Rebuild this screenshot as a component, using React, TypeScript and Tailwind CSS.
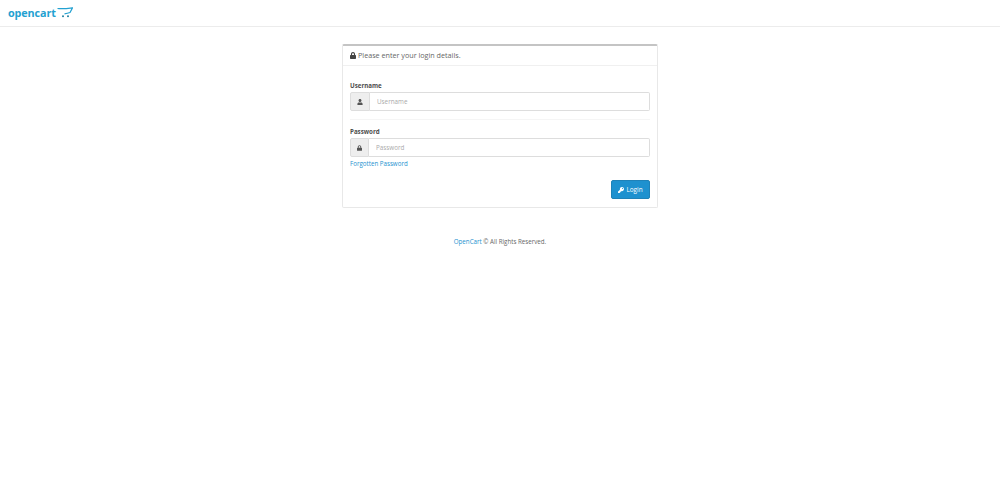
import React from 'react';
import { FaLock, FaUser, FaKey } from 'react-icons/fa';

const font = "font-['Open_Sans',sans-serif]";

const Logo: React.FC = () => (
    <div className="flex items-center">
        <span className={`text-[10.8px] leading-none font-bold text-[#23a1d1] tracking-[-0.1px] ${font}`}>opencart</span>
        <svg width="16" height="11" viewBox="0 0 16 11" className="ml-[1px] mt-[-1px]" fill="none">
            <path d="M0.5 1.5 C5 2 10 1.5 15.5 0.8 L13 5.5 C11 6.3 9.5 6.6 7.5 6.8" stroke="#23a1d1" strokeWidth="1.2" />
            <circle cx="6" cy="9.3" r="1" fill="#1f7f9f" />
            <circle cx="11" cy="9.3" r="1" fill="#1f7f9f" />
        </svg>
    </div>
);

interface FieldProps {
    label: string;
    placeholder: string;
    addonWidth: string;
    icon: React.ReactNode;
    type?: string;
}

const Field: React.FC<FieldProps> = ({ label, placeholder, addonWidth, icon, type = 'text' }) => (
    <div>
        <label className="block text-[6.2px] leading-[11px] font-bold text-[#4d4d4d] mb-[1px]">{label}</label>
        <div className="flex h-[19px]">
            <span className={`flex items-center justify-center bg-[#eeeeee] border border-[#dddddd] rounded-l-[2px] text-[#555555] ${addonWidth}`}>
                {icon}
            </span>
            <input
                type={type}
                placeholder={placeholder}
                className="flex-1 min-w-0 border border-l-0 border-[#dddddd] rounded-r-[2px] px-[7px] text-[6.3px] bg-white outline-none placeholder:text-[#aaaaaa]"
            />
        </div>
    </div>
);

export default function App() {
    return (
        <div className={`min-h-[493px] bg-white text-[#666666] ${font}`}>
            <header className="h-[27px] border-b border-[#ececec] pl-[8px] pr-4 flex items-center">
                <Logo />
            </header>
            <main className="w-[316px] mx-auto mt-[17px]">
                <section className="border border-[#e8e8e8] border-t-[2px] border-t-[#c4c4c4] rounded-[2px]">
                    <div className="h-[20px] pl-[7px] pr-[7px] border-b border-[#f0f0f0] flex items-center gap-[2px] text-[7.2px] text-[#666666]">
                        <FaLock className="w-[6px] h-[7px] text-[#444444]" />
                        <span>Please enter your login details.</span>
                    </div>
                    <div className="pl-[7px] pr-[7px] pt-[14px] pb-[8px]">
                        <Field label="Username" placeholder="Username" addonWidth="w-[20px]" icon={<FaUser className="w-[6px] h-[6px]" />} />
                        <div className="border-t border-[#f5f5f5] mt-[8px] mb-[6px]" />
                        <Field label="Password" placeholder="Password" addonWidth="w-[19px]" type="password" icon={<FaLock className="w-[5px] h-[6px]" />} />
                        <a href="#" className="block mt-[1px] text-[6.2px] leading-[11px] text-[#1e91cf]">Forgotten Password</a>
                        <div className="flex justify-end mt-[11px]">
                            <button className="h-[19px] w-[39px] flex items-center justify-center gap-[2px] bg-[#1e91cf] border border-[#1f82b8] rounded-[2px] text-white text-[6.4px]">
                                <FaKey className="w-[6px] h-[6px]" />
                                Login
                            </button>
                        </div>
                    </div>
                </section>
                <footer className="mt-[28px] text-center text-[6.2px] leading-[11px] text-[#666666]">
                    <a href="#" className="text-[#1e91cf]">OpenCart</a> © All Rights Reserved.
                </footer>
            </main>
        </div>
    );
}
